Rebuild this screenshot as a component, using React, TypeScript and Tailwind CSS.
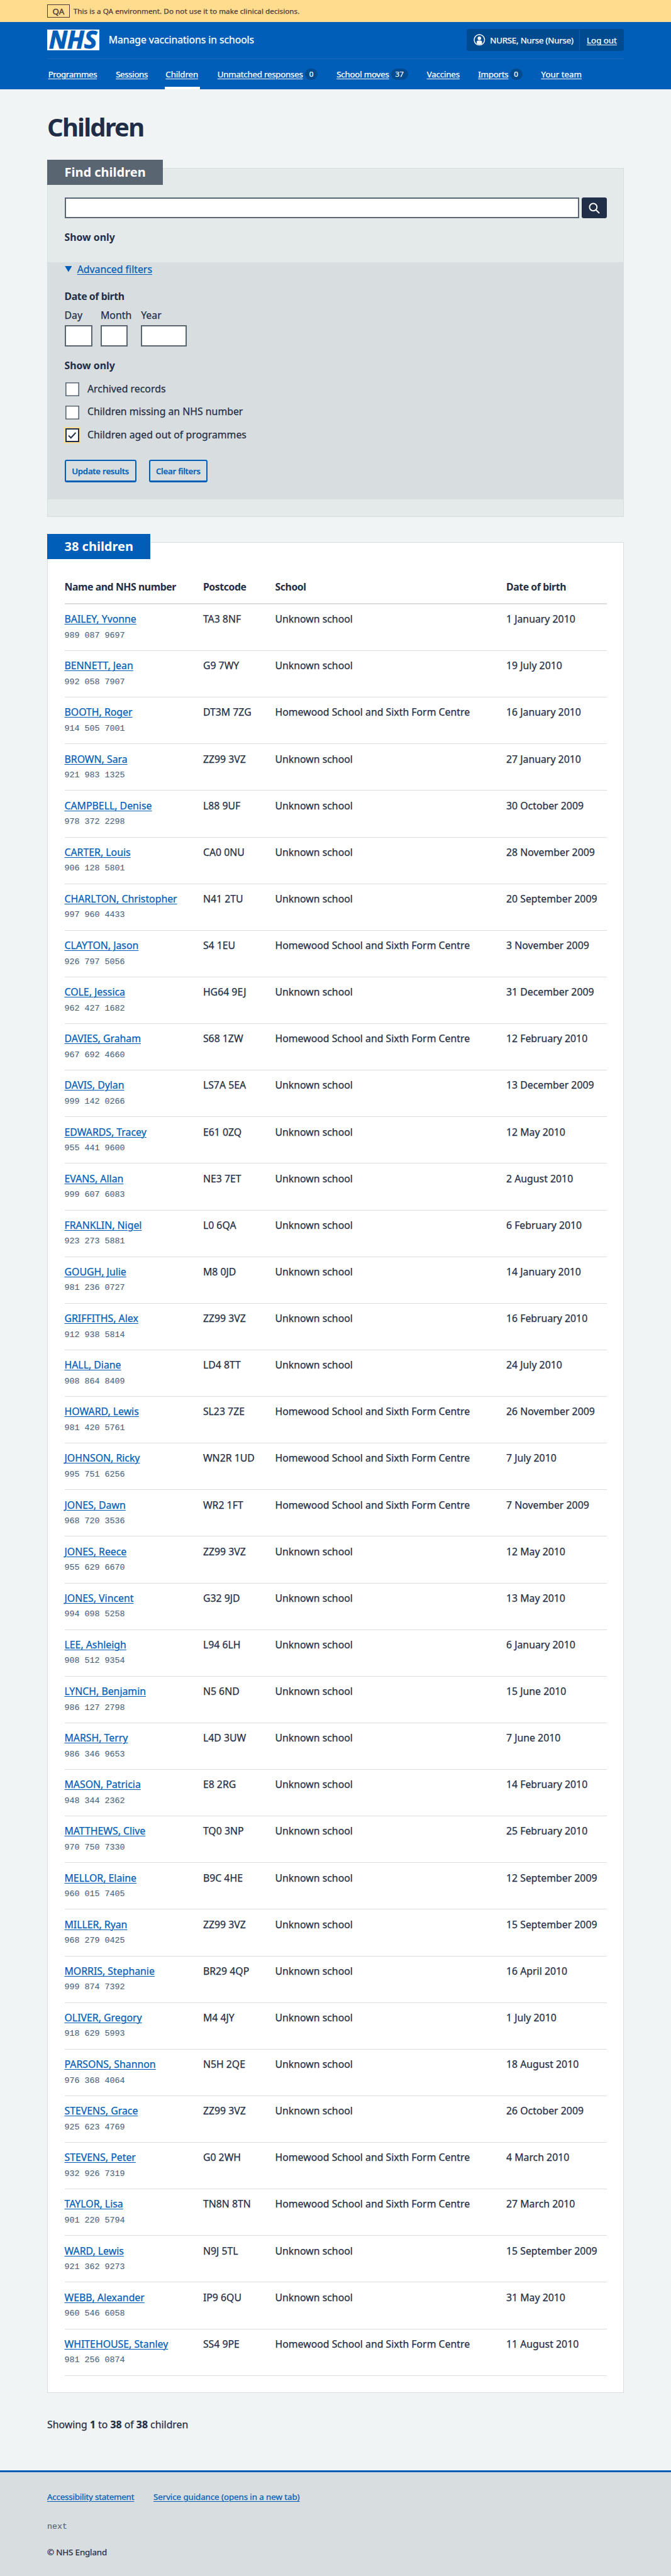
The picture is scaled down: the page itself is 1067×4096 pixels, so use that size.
type Child = { name: string; nhs: string; postcode: string; home?: boolean; dob: string };

const children: Child[] = [
  { name: "BAILEY, Yvonne", nhs: "989 087 9697", postcode: "TA3 8NF", dob: "1 January 2010" },
  { name: "BENNETT, Jean", nhs: "992 058 7907", postcode: "G9 7WY", dob: "19 July 2010" },
  { name: "BOOTH, Roger", nhs: "914 505 7001", postcode: "DT3M 7ZG", home: true, dob: "16 January 2010" },
  { name: "BROWN, Sara", nhs: "921 983 1325", postcode: "ZZ99 3VZ", dob: "27 January 2010" },
  { name: "CAMPBELL, Denise", nhs: "978 372 2298", postcode: "L88 9UF", dob: "30 October 2009" },
  { name: "CARTER, Louis", nhs: "906 128 5801", postcode: "CA0 0NU", dob: "28 November 2009" },
  { name: "CHARLTON, Christopher", nhs: "997 960 4433", postcode: "N41 2TU", dob: "20 September 2009" },
  { name: "CLAYTON, Jason", nhs: "926 797 5056", postcode: "S4 1EU", home: true, dob: "3 November 2009" },
  { name: "COLE, Jessica", nhs: "962 427 1682", postcode: "HG64 9EJ", dob: "31 December 2009" },
  { name: "DAVIES, Graham", nhs: "967 692 4660", postcode: "S68 1ZW", home: true, dob: "12 February 2010" },
  { name: "DAVIS, Dylan", nhs: "999 142 0266", postcode: "LS7A 5EA", dob: "13 December 2009" },
  { name: "EDWARDS, Tracey", nhs: "955 441 9600", postcode: "E61 0ZQ", dob: "12 May 2010" },
  { name: "EVANS, Allan", nhs: "999 607 6083", postcode: "NE3 7ET", dob: "2 August 2010" },
  { name: "FRANKLIN, Nigel", nhs: "923 273 5881", postcode: "L0 6QA", dob: "6 February 2010" },
  { name: "GOUGH, Julie", nhs: "981 236 0727", postcode: "M8 0JD", dob: "14 January 2010" },
  { name: "GRIFFITHS, Alex", nhs: "912 938 5814", postcode: "ZZ99 3VZ", dob: "16 February 2010" },
  { name: "HALL, Diane", nhs: "908 864 8409", postcode: "LD4 8TT", dob: "24 July 2010" },
  { name: "HOWARD, Lewis", nhs: "981 420 5761", postcode: "SL23 7ZE", home: true, dob: "26 November 2009" },
  { name: "JOHNSON, Ricky", nhs: "995 751 6256", postcode: "WN2R 1UD", home: true, dob: "7 July 2010" },
  { name: "JONES, Dawn", nhs: "968 720 3536", postcode: "WR2 1FT", home: true, dob: "7 November 2009" },
  { name: "JONES, Reece", nhs: "955 629 6670", postcode: "ZZ99 3VZ", dob: "12 May 2010" },
  { name: "JONES, Vincent", nhs: "994 098 5258", postcode: "G32 9JD", dob: "13 May 2010" },
  { name: "LEE, Ashleigh", nhs: "908 512 9354", postcode: "L94 6LH", dob: "6 January 2010" },
  { name: "LYNCH, Benjamin", nhs: "986 127 2798", postcode: "N5 6ND", dob: "15 June 2010" },
  { name: "MARSH, Terry", nhs: "986 346 9653", postcode: "L4D 3UW", dob: "7 June 2010" },
  { name: "MASON, Patricia", nhs: "948 344 2362", postcode: "E8 2RG", dob: "14 February 2010" },
  { name: "MATTHEWS, Clive", nhs: "970 750 7330", postcode: "TQ0 3NP", dob: "25 February 2010" },
  { name: "MELLOR, Elaine", nhs: "960 015 7405", postcode: "B9C 4HE", dob: "12 September 2009" },
  { name: "MILLER, Ryan", nhs: "968 279 0425", postcode: "ZZ99 3VZ", dob: "15 September 2009" },
  { name: "MORRIS, Stephanie", nhs: "999 874 7392", postcode: "BR29 4QP", dob: "16 April 2010" },
  { name: "OLIVER, Gregory", nhs: "918 629 5993", postcode: "M4 4JY", dob: "1 July 2010" },
  { name: "PARSONS, Shannon", nhs: "976 368 4064", postcode: "N5H 2QE", dob: "18 August 2010" },
  { name: "STEVENS, Grace", nhs: "925 623 4769", postcode: "ZZ99 3VZ", dob: "26 October 2009" },
  { name: "STEVENS, Peter", nhs: "932 926 7319", postcode: "G0 2WH", home: true, dob: "4 March 2010" },
  { name: "TAYLOR, Lisa", nhs: "901 220 5794", postcode: "TN8N 8TN", home: true, dob: "27 March 2010" },
  { name: "WARD, Lewis", nhs: "921 362 9273", postcode: "N9J 5TL", dob: "15 September 2009" },
  { name: "WEBB, Alexander", nhs: "960 546 6058", postcode: "IP9 6QU", dob: "31 May 2010" },
  { name: "WHITEHOUSE, Stanley", nhs: "981 256 0874", postcode: "SS4 9PE", home: true, dob: "11 August 2010" },
];

const navItems: { label: string; width: string; badge?: string; badgeWidth?: string; current?: boolean }[] = [
  { label: "Programmes", width: "w-[77.5px] tracking-[-0.027em]" },
  { label: "Sessions", width: "w-[49.2px] tracking-[-0.027em]" },
  { label: "Children", width: "w-[52.5px] tracking-[-0.01em]", current: true },
  { label: "Unmatched responses", width: "w-[135.8px] tracking-[-0.0185em]", badge: "0", badgeWidth: "w-[20px]" },
  { label: "School moves", width: "w-[83.3px] tracking-[-0.015em]", badge: "37", badgeWidth: "w-[26.7px]" },
  { label: "Vaccines", width: "w-[51.7px] tracking-[-0.012em]" },
  { label: "Imports", width: "w-[46.7px] tracking-[-0.02em]", badge: "0", badgeWidth: "w-[20px]" },
  { label: "Your team", width: "w-[64.2px]" },
];

const link = "text-[#005eb8] underline decoration-1 underline-offset-2";

function EnvironmentBanner() {
  return (
    <div className="h-[35px] bg-[#ffdc8e] text-[#4d3b3b]">
      <div className="mx-auto flex h-full w-[917px] items-center">
        <strong className="flex h-[21.7px] w-[35.8px] items-center justify-center border border-current text-[13.3px] leading-5 font-normal [-webkit-text-stroke:0.4px]">
          QA
        </strong>
        <span className="ml-[5.9px] pt-[1.5px] text-[11.67px] leading-5 tracking-[0.004em]">
          This is a QA environment. Do not use it to make clinical decisions.
        </span>
      </div>
    </div>
  );
}

function NhsLogo() {
  return (
    <svg className="h-[33.3px] w-[83.3px] overflow-visible bg-white" viewBox="0 0 100 40" role="img" aria-label="NHS">
      <text
        x="3.2"
        y="36.2"
        textLength="92"
        lengthAdjust="spacing"
        className="fill-[#005eb8] stroke-[#005eb8] font-['Noto_Sans',sans-serif] text-[46.5px] font-bold italic"
        strokeWidth="1.2"
      >
        NHS
      </text>
    </svg>
  );
}

function UserIcon() {
  return (
    <svg className="size-[18.6px]" viewBox="0 0 24 24" aria-hidden="true">
      <circle cx="12" cy="12" r="10.7" fill="none" stroke="white" strokeWidth="1.8" />
      <circle cx="12" cy="8.9" r="3.6" fill="white" />
      <path d="M6.6 20V16.2a2.8 2.8 0 0 1 2.8-2.8h5.2a2.8 2.8 0 0 1 2.8 2.8V20a11 11 0 0 1-10.8 0z" fill="white" />
    </svg>
  );
}

function Header() {
  return (
    <header className="h-[106.67px] bg-[#005eb8] text-white">
      <div className="mx-auto flex h-full w-[917px] flex-col">
        <div className="flex h-[59px] items-center border-b border-[#1f6bbb] pb-px">
          <div className="flex flex-1 items-center">
            <NhsLogo />
            <span className="ml-[14.5px] text-[15.83px] leading-6 tracking-[-0.006em]">Manage vaccinations in schools</span>
          </div>
          <div className="flex h-[35px] items-center rounded-[3.3px] bg-[#004b8f] text-[13.33px] leading-5">
            <div className="flex h-[33px] w-[180px] items-center border-r border-[#005eb8] pl-[11.3px]">
              <UserIcon />
              <span className="ml-[7.4px] pt-px tracking-[-0.0168em] whitespace-nowrap">NURSE, Nurse (Nurse)</span>
            </div>
            <a href="#" className="w-[70px] pt-px text-center underline decoration-1 underline-offset-2">Log out</a>
          </div>
        </div>
        <nav className="flex flex-1 gap-[30px] pl-[1.67px] text-[13.33px] leading-5">
          {navItems.map((item) => (
            <div key={item.label} className="relative flex items-center">
              <a href="#" className={item.width + " whitespace-nowrap underline decoration-1 underline-offset-2"}>
                {item.label}
              </a>
              {item.badge && (
                <span className={item.badgeWidth + " ml-[3.5px] flex h-[18.5px] items-center justify-center rounded-full bg-[#004b8f] text-[11.67px]"}>
                  {item.badge}
                </span>
              )}
              {item.current && <span className="absolute -inset-x-[1.67px] bottom-0 h-[3.5px] bg-white" />}
            </div>
          ))}
        </nav>
      </div>
    </header>
  );
}

function FindChildren() {
  const filters = [
    { label: "Archived records", checked: false },
    { label: "Children missing an NHS number", checked: false },
    { label: "Children aged out of programmes", checked: true },
  ];
  const dateParts = [
    { label: "Day", cell: "w-[57.5px]", box: "w-[44.2px]" },
    { label: "Month", cell: "w-[64.2px]", box: "w-[43.3px]" },
    { label: "Year", cell: "w-[72.5px]", box: "w-[72.5px]" },
  ];
  const button =
    "flex h-[36.7px] items-center justify-center rounded-[3.3px] border-2 border-b-[3.5px] border-[#005eb8] pt-px font-['Open_Sans',sans-serif] text-[13.33px] leading-5 font-semibold tracking-[-0.02em] text-[#005eb8]";
  return (
    <section className="border border-[#d8dde0] bg-[#e4e9e9]">
      <h2 className="-mt-[13.5px] -ml-px h-10 w-[184.2px] bg-[#5a6572] pl-[27.5px] text-[20px] leading-[39px] font-bold text-white [-webkit-text-stroke:0]">
        Find children
      </h2>
      <div className="mx-[26.5px] mt-5 flex h-[33.3px] gap-[3.6px]">
        <input className="min-w-0 flex-1 border-2 border-[#5a6572] bg-white" />
        <button className="flex w-10 items-center justify-center rounded-[3.3px] bg-[#202e48]" aria-label="Search">
          <svg className="size-[18px]" viewBox="0 0 22 22" fill="none" stroke="white" strokeWidth="2.4" strokeLinecap="round" aria-hidden="true">
            <circle cx="9" cy="9" r="7.2" />
            <path d="M14.3 14.3 20.2 20.2" />
          </svg>
        </button>
      </div>
      <h3 className="mx-[26.5px] mt-[18.9px] mb-[27.8px] leading-[23.33px] font-bold [-webkit-text-stroke:0]">Show only</h3>
      <div className="bg-[#d8dde0] px-[26.5px] pt-[0.6px] pb-[26.7px]">
        <div className="flex h-5 items-center gap-[8.6px]">
          <svg className="h-[9.6px] w-[11.6px] fill-[#005eb8]" viewBox="0 0 14 12" aria-hidden="true">
            <path d="M0 0h14L7 12z" />
          </svg>
          <a href="#" className={link + " leading-5"}>Advanced filters</a>
        </div>
        <h3 className="mt-[21.7px] leading-[23.33px] font-bold tracking-[-0.027em] [-webkit-text-stroke:0]">Date of birth</h3>
        <div className="mt-[6.7px] flex">
          {dateParts.map((part) => (
            <label key={part.label} className={part.cell + " leading-[23.33px]"}>
              {part.label}
              <input className={part.box + " mt-[4.4px] block h-[33.3px] border-2 border-[#5a6572] bg-white"} />
            </label>
          ))}
        </div>
        <h3 className="mt-[18.9px] mb-[7.8px] leading-[23.33px] font-bold [-webkit-text-stroke:0]">Show only</h3>
        {filters.map((filter) => (
          <label key={filter.label} className="flex h-[36.67px] items-center pl-[1.6px]">
            {filter.checked ? (
              <span className="flex size-[22px] items-center justify-center border-2 border-[#202e48] bg-white outline-[2.5px] outline-[#ffdc8e]">
                <svg className="size-4" viewBox="0 0 16 16" fill="none" stroke="#202e48" strokeWidth="2" aria-hidden="true">
                  <path d="M2 8.6 5.8 12.2 13.4 3.8" />
                </svg>
              </span>
            ) : (
              <span className="flex size-[22px] bg-white shadow-[inset_0_0_0_1.6px_#5a6572]" />
            )}
            <span className="ml-[12.9px] pb-[1.4px] leading-[23.33px]">{filter.label}</span>
          </label>
        ))}
        <div className="mt-5 flex gap-5">
          <button className={button + " w-[114.2px]"}>Update results</button>
          <button className={button + " w-[93.3px]"}>Clear filters</button>
        </div>
      </div>
      <div className="h-[26.5px]" />
    </section>
  );
}

const columns = "grid grid-cols-[220.4px_114.6px_367.5px_1fr]";

function Results() {
  return (
    <section className="mt-10 border border-[#d8dde0] bg-white px-[26.5px] pb-[26px]">
      <h2 className="-mt-[13.5px] -ml-[27.5px] h-10 w-[164.2px] bg-[#005eb8] pl-[27.5px] text-[20px] leading-[39px] font-bold text-white [-webkit-text-stroke:0]">
        38 children
      </h2>
      <div className={columns + " mt-[32.4px] border-b-2 border-[#d8dde0] pb-[14.1px] leading-[23.33px] font-bold tracking-[-0.027em] [-webkit-text-stroke:0]"}>
        <span>Name and NHS number</span>
        <span>Postcode</span>
        <span>School</span>
        <span>Date of birth</span>
      </div>
      {children.map((child) => (
        <div key={child.nhs} className={columns + " h-[74.14px] border-b border-[#d8dde0] pt-[12.3px] leading-[23.33px]"}>
          <div>
            <a href="#" className={link}>{child.name}</a>
            <div className="mt-[4.1px] font-['Liberation_Mono',monospace] text-[13.33px] leading-5 text-[#4c6272] [-webkit-text-stroke:0.1px]">{child.nhs}</div>
          </div>
          <span>{child.postcode}</span>
          <span>{child.home ? "Homewood School and Sixth Form Centre" : "Unknown school"}</span>
          <span>{child.dob}</span>
        </div>
      ))}
    </section>
  );
}

function Footer() {
  return (
    <footer className="mt-[61px] flex-1 border-t-[3.4px] border-[#005eb8] bg-[#d8dde0] text-[13.33px] leading-5">
      <div className="mx-auto w-[917px] pt-[28.4px]">
        <div className="flex gap-[30.5px]">
          <a href="#" className={link + " w-[138.5px] tracking-[-0.0143em] whitespace-nowrap"}>Accessibility statement</a>
          <a href="#" className={link + " tracking-[-0.005em]"}>Service guidance (opens in a new tab)</a>
        </div>
        <p className="mt-[28.4px] font-['Liberation_Mono',monospace] text-[#4c6272] [-webkit-text-stroke:0.1px]">next</p>
        <p className="mt-5 tracking-[-0.009em]">© NHS England</p>
      </div>
    </footer>
  );
}

export default function App() {
  return (
    <div className="flex h-[4096px] w-[1067px] flex-col overflow-hidden bg-[#f0f4f5] font-['Noto_Sans',sans-serif] text-[15.83px] text-[#1f2e46] [-webkit-text-stroke:0.25px]">
      <EnvironmentBanner />
      <Header />
      <main className="mx-auto w-[917px] pt-[35.3px]">
        <h1 className="mb-[39.7px] text-[40px] leading-[50px] font-bold tracking-[-0.045em] [-webkit-text-stroke:0]">Children</h1>
        <FindChildren />
        <Results />
        <p className="mt-[39.3px] leading-[23.33px]">
          Showing <b>1</b> to <b>38</b> of <b>38</b> children
        </p>
      </main>
      <Footer />
    </div>
  );
}
